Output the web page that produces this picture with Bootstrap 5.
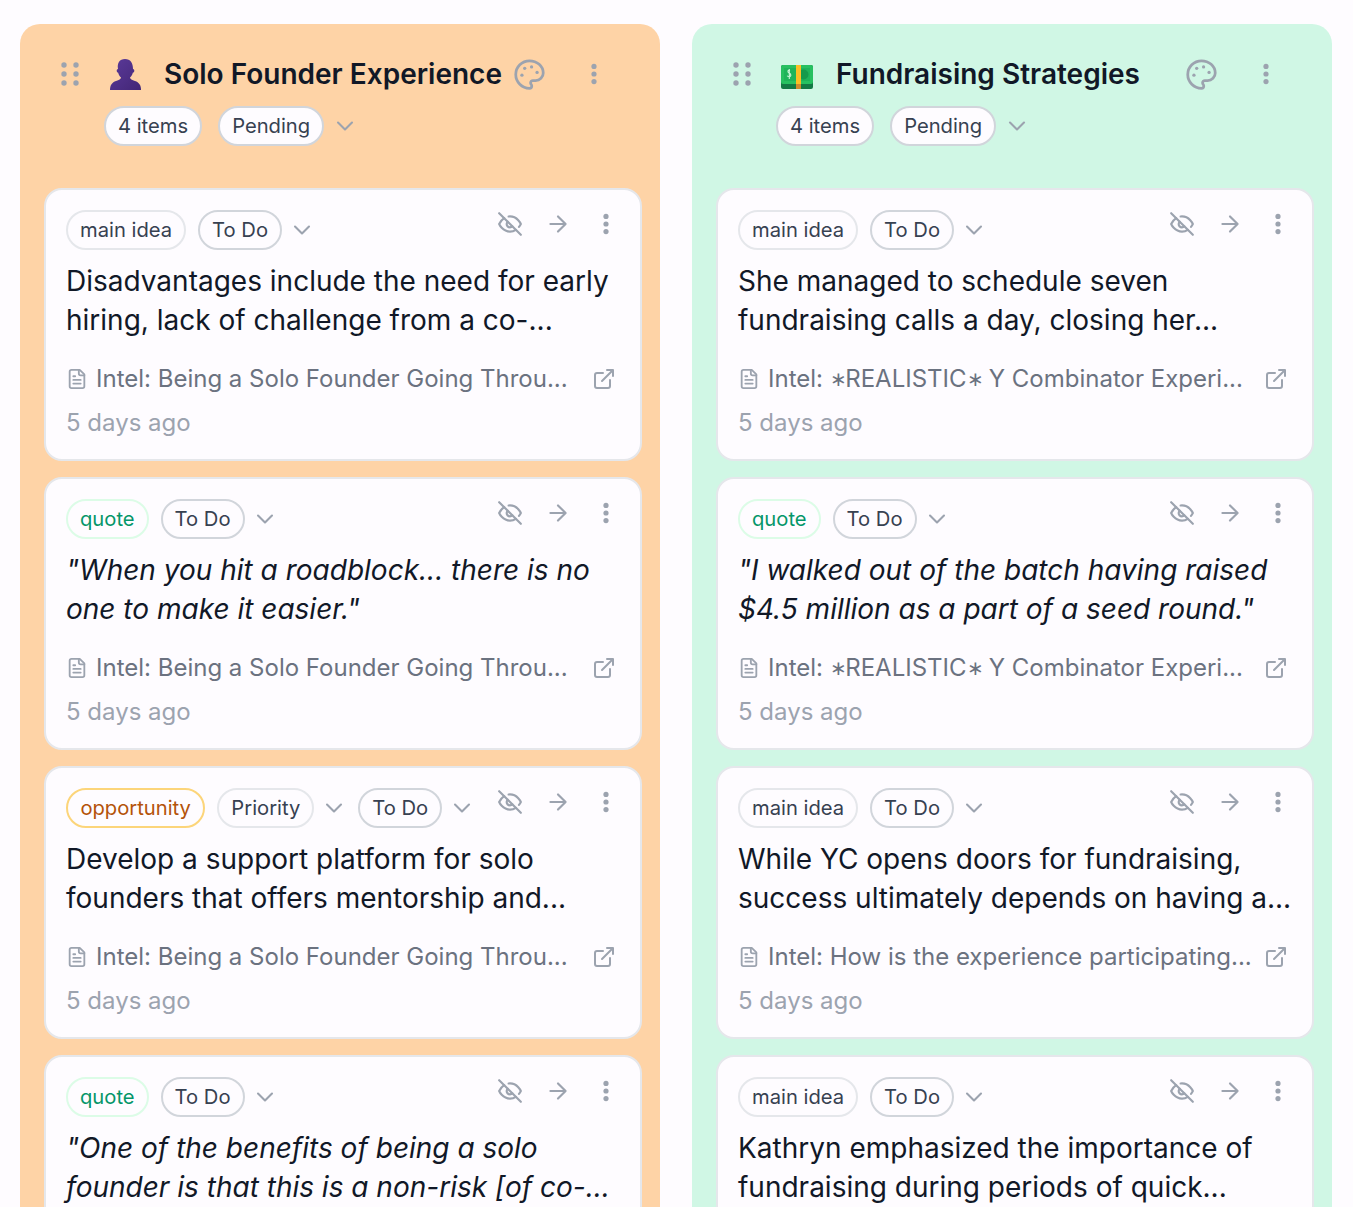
<!DOCTYPE html>
<html lang="en">
<head>
  <meta charset="UTF-8">
  <meta name="viewport" content="width=device-width, initial-scale=1.0">
  <title>Intel Board</title>

  <link href="https://cdn.jsdelivr.net/npm/bootstrap@5.3.0/dist/css/bootstrap.min.css" rel="stylesheet">
  <script src="https://cdn.jsdelivr.net/npm/bootstrap@5.3.0/dist/js/bootstrap.bundle.min.js"></script>

  <style>
    html, body {
      height: 100%;
      overflow: hidden;
    }

    body {
      font-family: "Inter", "Liberation Sans", sans-serif;
      background: #fefcff;
      color: #111827;
    }

    .board {
      padding: 24px 21px 0 20px;
      gap: 32px;
    }

    /* Columns */
    .board-col {
      width: 640px;
      flex: none;
      height: 1300px;
      padding: 0 18px 0 24px;
      border-radius: 20px;
    }

    .col-orange { background: #fed3a6; }
    .col-green { background: #d0f7e5; }

    .col-head {
      height: 164px;
      padding-top: 31px;
    }

    .col-title-row {
      height: 38px;
      padding-left: 17px;
    }

    .col-title {
      font-size: 28px;
      font-weight: 600;
      line-height: 38px;
      margin: 0 0 0 23px;
      width: 349px;
      flex: none;
      white-space: nowrap;
    }

    .emoji-icon {
      margin-left: 30px;
      flex: none;
    }

    .emoji-money { margin-top: 6px; }

    .palette-ico { margin: 0 1px 0 0; }

    .head-dots { margin-left: 34px; }

    .col-pills {
      margin: 13px 0 0 60px;
      gap: 16px;
    }

    .col-pills .chev { margin-left: -9px; }

    /* Pills */
    .tag {
      display: inline-block;
      font-size: 20.2px;
      line-height: 25.5px;
      padding: 5px 12px;
      border: 2px solid #e5e7eb;
      border-radius: 20px;
      background: #fefcff;
      color: #374151;
      white-space: nowrap;
    }

    .tag-dark { border-color: #d1d5db; }
    .tag-quote { border-color: #dcfce7; color: #059669; }
    .tag-opp { border-color: #fcd57a; color: #b45309; padding: 5px 12.4px; }

    .ico {
      fill: none;
      stroke: #9ca3af;
      stroke-width: 2;
      stroke-linecap: round;
      stroke-linejoin: round;
      flex: none;
      display: block;
    }

    .dot-ico { fill: #9ca3af; stroke: none; }

    .chev { stroke-width: 1.8; }

    /* Cards */
    .idea-card {
      height: 273px;
      background: #fefcff;
      border: 2px solid #e5e7eb;
      border-radius: 18px;
      padding: 20px 20px 0;
      margin-bottom: 16px;
    }

    .card-top { height: 40px; }

    .card-tags { gap: 12px; }

    .card-tags .chev {
      margin-left: -6px;
      margin-right: -2px;
    }

    .card-actions {
      gap: 22px;
      margin-top: 1px;
      margin-right: 1px;
    }

    .card-body-text {
      font-size: 28px;
      line-height: 39px;
      margin: 12px 0 0;
      height: 78px;
    }

    .source-row {
      font-size: 24px;
      line-height: 32px;
      color: #6b7280;
      margin-top: 23px;
    }

    .source-name {
      margin-left: 8px;
      flex: 1;
      white-space: nowrap;
    }

    /* the asterisks in the reference sit on the middle of the line */
    .ast {
      font-size: 20px;
      vertical-align: 1.5px;
      line-height: 1;
      letter-spacing: -1.5px;
    }

    .source-link { margin-right: 4px; }

    .when {
      font-size: 24px;
      line-height: 32px;
      color: #9ca3af;
      margin-top: 12px;
    }
  </style>
</head>
<body>
  <svg width="0" height="0" class="position-absolute">
    <symbol id="i-eyeoff" viewBox="0 0 24 24">
      <path d="M9.88 9.88a3 3 0 1 0 4.24 4.24"/>
      <path d="M10.73 5.08A10.43 10.43 0 0 1 12 5c7 0 10 7 10 7a13.16 13.16 0 0 1-1.67 2.68"/>
      <path d="M6.61 6.61A13.526 13.526 0 0 0 2 12s3 7 10 7a9.74 9.74 0 0 0 5.39-1.61"/>
      <path d="M2 2l20 20"/>
    </symbol>
    <symbol id="i-arrow" viewBox="0 0 24 24"><path d="M5 12h14M12 5l7 7-7 7"/></symbol>
    <symbol id="i-chev" viewBox="0 0 24 24"><path d="M6 9l6 6 6-6"/></symbol>
    <symbol id="i-file" viewBox="0 0 24 24">
      <path d="M15 2H6a2 2 0 0 0-2 2v16a2 2 0 0 0 2 2h12a2 2 0 0 0 2-2V7Z"/>
      <path d="M14 2v4a2 2 0 0 0 2 2h4M10 9H8M16 13H8M16 17H8"/>
    </symbol>
    <symbol id="i-ext" viewBox="0 0 24 24">
      <path d="M15 3h6v6M10 14 21 3"/>
      <path d="M18 13v6a2 2 0 0 1-2 2H5a2 2 0 0 1-2-2V8a2 2 0 0 1 2-2h6"/>
    </symbol>
    <symbol id="i-palette" viewBox="0 0 24 24">
      <path d="M12 2C6.5 2 2 6.5 2 12s4.5 10 10 10c.926 0 1.648-.746 1.648-1.688 0-.437-.18-.835-.437-1.125-.29-.289-.438-.652-.438-1.125a1.64 1.64 0 0 1 1.668-1.668h1.996c3.051 0 5.555-2.503 5.555-5.554C21.965 6.012 17.461 2 12 2z"/>
      <circle cx="13.5" cy="6.5" r="1.2" fill="#9ca3af" stroke="none"/>
      <circle cx="17.5" cy="10.5" r="1.2" fill="#9ca3af" stroke="none"/>
      <circle cx="8.5" cy="7.5" r="1.2" fill="#9ca3af" stroke="none"/>
      <circle cx="6.5" cy="12.5" r="1.2" fill="#9ca3af" stroke="none"/>
    </symbol>
    <symbol id="i-dots" viewBox="0 0 24 24">
      <circle cx="12" cy="5" r="2.4"/><circle cx="12" cy="12" r="2.4"/><circle cx="12" cy="19" r="2.4"/>
    </symbol>
    <symbol id="i-grip" viewBox="0 0 18 24">
      <circle cx="3" cy="3" r="2.7"/><circle cx="15" cy="3" r="2.7"/>
      <circle cx="3" cy="12" r="2.7"/><circle cx="15" cy="12" r="2.7"/>
      <circle cx="3" cy="21" r="2.7"/><circle cx="15" cy="21" r="2.7"/>
    </symbol>
    <linearGradient id="bust" x1="0" y1="0" x2="1" y2="1">
      <stop offset="0" stop-color="#5b3a9a"/><stop offset="1" stop-color="#432676"/>
    </linearGradient>
    <symbol id="i-person" viewBox="0 0 32 32">
      <path fill="url(#bust)" d="M1 32c0-5 2-7.500 6-9 3-1 5-2 5-3.500-1.500-1-2.500-3-2.800-4.700-1-.2-1.500-1-1.500-2s.5-1.700 1.300-1.800C8 5 10.500 1 16 1s8 4 8 10c.8.100 1.300.8 1.300 1.800s-.5 1.800-1.500 2c-.3 1.700-1.300 3.700-2.800 4.700 0 1.500 2 2.500 5 3.500 4 1.500 6 4 6 9z"/>
    </symbol>
    <symbol id="i-money" viewBox="0 0 32 24">
      <rect x="0" y="0" width="32" height="24" rx="2" fill="#137a45"/>
      <rect x="0" y="0" width="32" height="19" rx="2" fill="#27c060"/>
      <rect x="3" y="3" width="26" height="13" fill="#1fb45a"/>
      <circle cx="22.500" cy="9.500" r="5" fill="#149a4b"/>
      <path d="M9 5.500c-2-1-3 1.500-1 2.500 2.500 1 2.500 3.500 0 3.500-1 0-1.500-.3-1.800-.8M8.300 4v10" fill="none" stroke="#c9f5d6" stroke-width="1.100"/>
      <rect x="15" y="0" width="5" height="19" fill="#fbbf24"/>
      <rect x="15" y="19" width="5" height="5" fill="#d08a2e"/>
    </symbol>
  </svg>

  <div class="board d-flex" id="board"></div>

  <script>
    const INTEL_A = "Intel: Being a Solo Founder Going Throu...";
    const INTEL_B = "Intel: <span class=\"ast\">∗</span>REALISTIC<span class=\"ast\">∗</span> Y Combinator Experi...";
    const INTEL_C = "Intel: How is the experience participating...";

    const columns = [
      {
        title: "Solo Founder Experience", cls: "col-orange", icon: "i-person", iconW: 32, iconH: 32,
        cards: [
          { tag: "main idea", text: "Disadvantages include the need for early hiring, lack of challenge from a co-...", src: INTEL_A },
          { tag: "quote", text: "\"When you hit a roadblock... there is no one to make it easier.\"", src: INTEL_A },
          { tag: "opportunity", priority: true, text: "Develop a support platform for solo founders that offers mentorship and...", src: INTEL_A },
          { tag: "quote", text: "\"One of the benefits of being a solo founder is that this is a non-risk [of co-...", src: INTEL_A }
        ]
      },
      {
        title: "Fundraising Strategies", cls: "col-green", icon: "i-money", iconW: 32, iconH: 24,
        cards: [
          { tag: "main idea", text: "She managed to schedule seven fundraising calls a day, closing her...", src: INTEL_B },
          { tag: "quote", text: "\"I walked out of the batch having raised $4.5 million as a part of a seed round.\"", src: INTEL_B },
          { tag: "main idea", text: "While YC opens doors for fundraising, success ultimately depends on having a...", src: INTEL_C },
          { tag: "main idea", text: "Kathryn emphasized the importance of fundraising during periods of quick...", src: INTEL_C }
        ]
      }
    ];

    function ico(id, size, extra) {
      return `<svg class="ico ${extra || ""}" width="${size}" height="${size}"><use href="#${id}"/></svg>`;
    }

    function tagHtml(name) {
      const cls = name === "quote" ? "tag-quote" : name === "opportunity" ? "tag-opp" : "";
      return `<span class="tag ${cls}">${name}</span>`;
    }

    function cardHtml(card) {
      const isQuote = card.tag === "quote";
      return `
        <div class="idea-card">
          <div class="card-top d-flex justify-content-between align-items-start">
            <div class="card-tags d-flex align-items-center">
              ${tagHtml(card.tag)}
              ${card.priority ? `<span class="tag">Priority</span>${ico("i-chev", 28, "chev")}` : ""}
              <span class="tag tag-dark">To Do</span>${ico("i-chev", 28, "chev")}
            </div>
            <div class="card-actions d-flex align-items-center">
              ${ico("i-eyeoff", 26)}${ico("i-arrow", 26)}${ico("i-dots", 26, "dot-ico")}
            </div>
          </div>
          <p class="card-body-text ${isQuote ? "fst-italic" : ""}">${card.text}</p>
          <div class="source-row d-flex align-items-center">
            ${ico("i-file", 22)}
            <span class="source-name">${card.src}</span>
            ${ico("i-ext", 24, "source-link")}
          </div>
          <div class="when">5 days ago</div>
        </div>`;
    }

    document.getElementById("board").innerHTML = columns.map((col) => `
      <section class="board-col ${col.cls}">
        <div class="col-head">
          <div class="col-title-row d-flex align-items-center">
            <svg class="ico dot-ico" width="18" height="24"><use href="#i-grip"/></svg>
            <svg class="emoji-icon ${col.icon === "i-money" ? "emoji-money" : ""}" width="${col.iconW}" height="${col.iconH}"><use href="#${col.icon}"/></svg>
            <h2 class="col-title">${col.title}</h2>
            ${ico("i-palette", 33, "palette-ico")}
            ${ico("i-dots", 26, "dot-ico head-dots")}
          </div>
          <div class="col-pills d-flex align-items-center">
            <span class="tag tag-dark">4 items</span>
            <span class="tag tag-dark">Pending</span>
            ${ico("i-chev", 28, "chev")}
          </div>
        </div>
        ${col.cards.map(cardHtml).join("")}
      </section>`).join("");
  </script>
</body>
</html>
